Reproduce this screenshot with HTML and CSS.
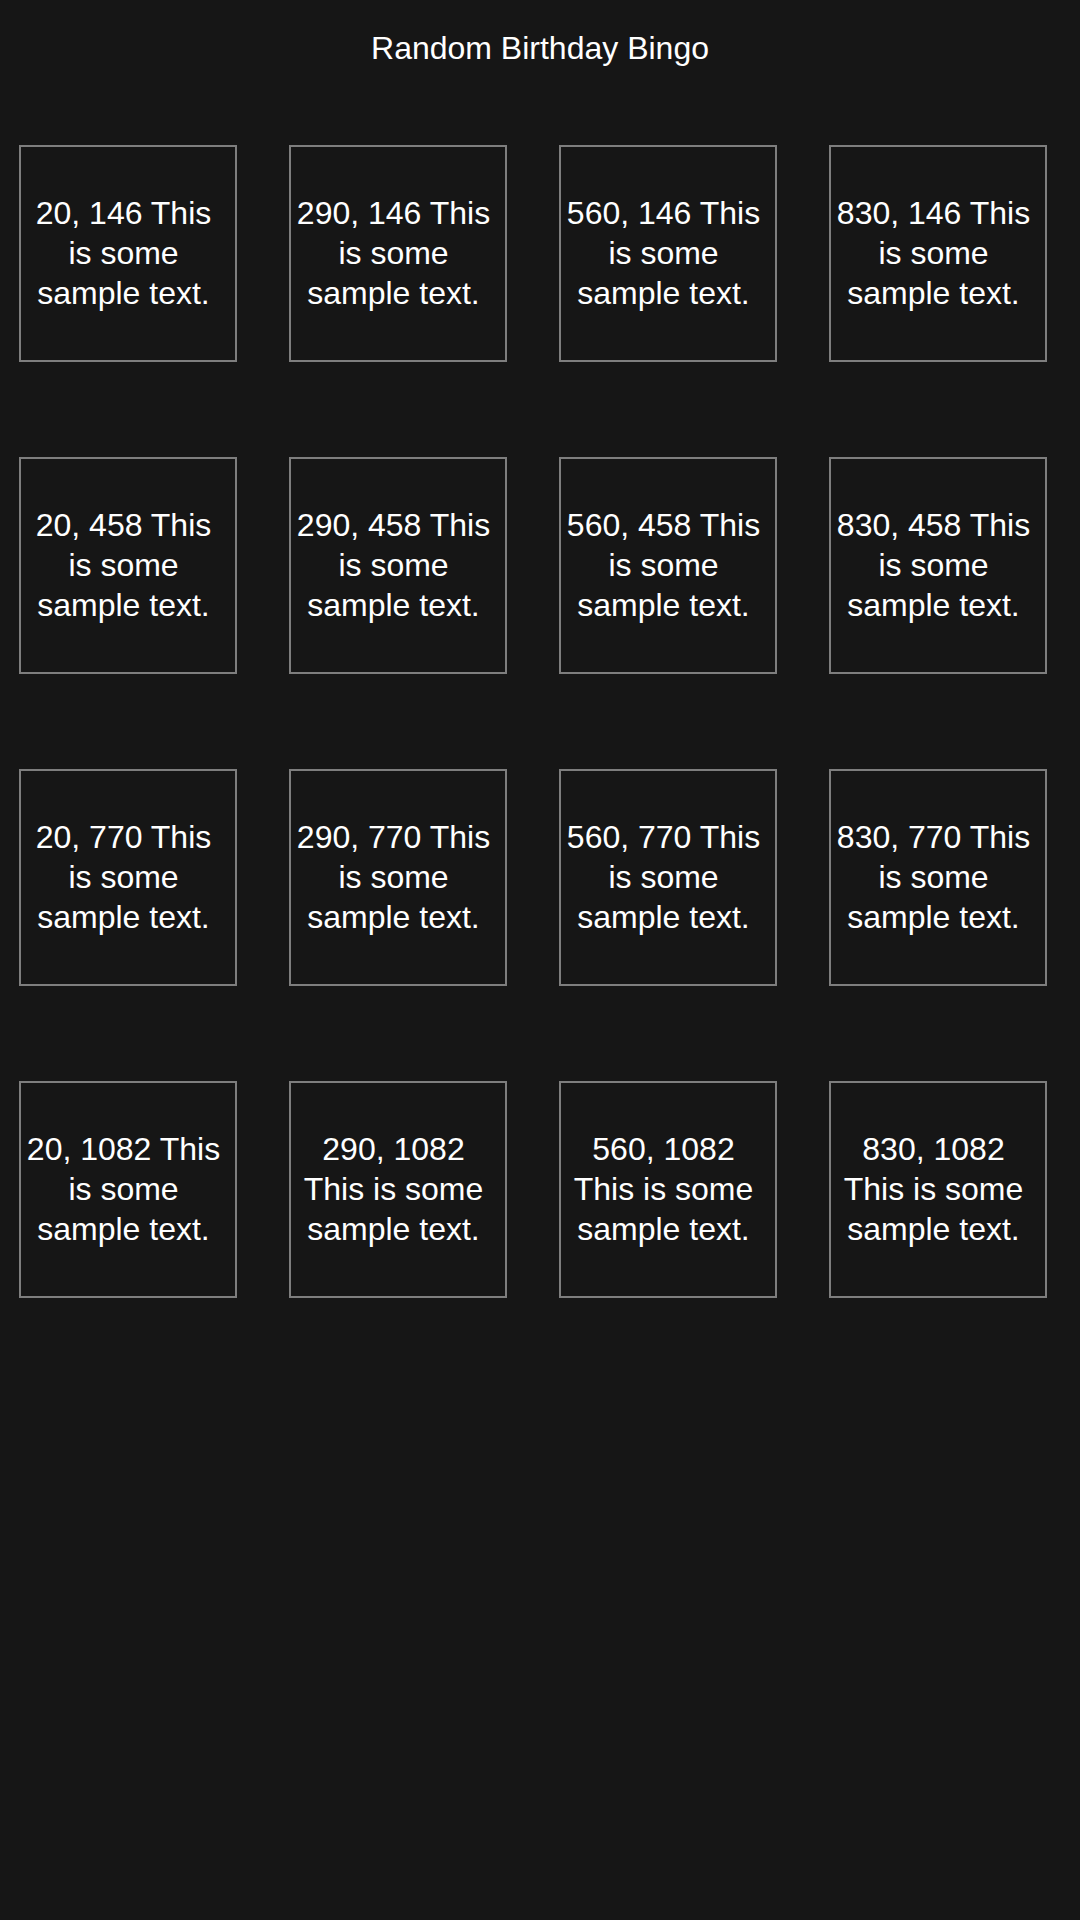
FILE: index.html
```html
<!DOCTYPE html>
<html>
<head>
<meta charset="utf-8">
<title>Random Birthday Bingo</title>
<link rel="stylesheet" href="styles.css">
</head>
<body>
<h1 class="title">Random Birthday Bingo</h1>
<div class="grid">
  <div class="cell"><span>20, 146 This is some sample text.</span></div>
  <div class="cell"><span>290, 146 This is some sample text.</span></div>
  <div class="cell"><span>560, 146 This is some sample text.</span></div>
  <div class="cell"><span>830, 146 This is some sample text.</span></div>
  <div class="cell"><span>20, 458 This is some sample text.</span></div>
  <div class="cell"><span>290, 458 This is some sample text.</span></div>
  <div class="cell"><span>560, 458 This is some sample text.</span></div>
  <div class="cell"><span>830, 458 This is some sample text.</span></div>
  <div class="cell"><span>20, 770 This is some sample text.</span></div>
  <div class="cell"><span>290, 770 This is some sample text.</span></div>
  <div class="cell"><span>560, 770 This is some sample text.</span></div>
  <div class="cell"><span>830, 770 This is some sample text.</span></div>
  <div class="cell"><span>20, 1082 This is some sample text.</span></div>
  <div class="cell"><span>290, 1082 This is some sample text.</span></div>
  <div class="cell"><span>560, 1082 This is some sample text.</span></div>
  <div class="cell"><span>830, 1082 This is some sample text.</span></div>
</div>
</body>
</html>
```
FILE: styles.css
```css
html, body {
  margin: 0;
  padding: 0;
  background: #161616;
  color: #ffffff;
  font-family: "Liberation Sans", Arial, sans-serif;
  min-height: 1920px;
}

.title {
  margin: 0;
  padding-top: 28px;
  font-size: 32px;
  line-height: 40px;
  font-weight: normal;
  text-align: center;
}

.grid {
  display: grid;
  grid-template-columns: repeat(4, 218px);
  grid-auto-rows: 217px;
  column-gap: 52px;
  row-gap: 95px;
  margin-top: 77px;
  padding-left: 19px;
}

.cell {
  box-sizing: border-box;
  border: 2px solid #7e7e7e;
  display: flex;
  align-items: center;
  justify-content: center;
  padding: 0 9px 2px 0;
  text-align: center;
  font-size: 32px;
  line-height: 40px;
}
```
